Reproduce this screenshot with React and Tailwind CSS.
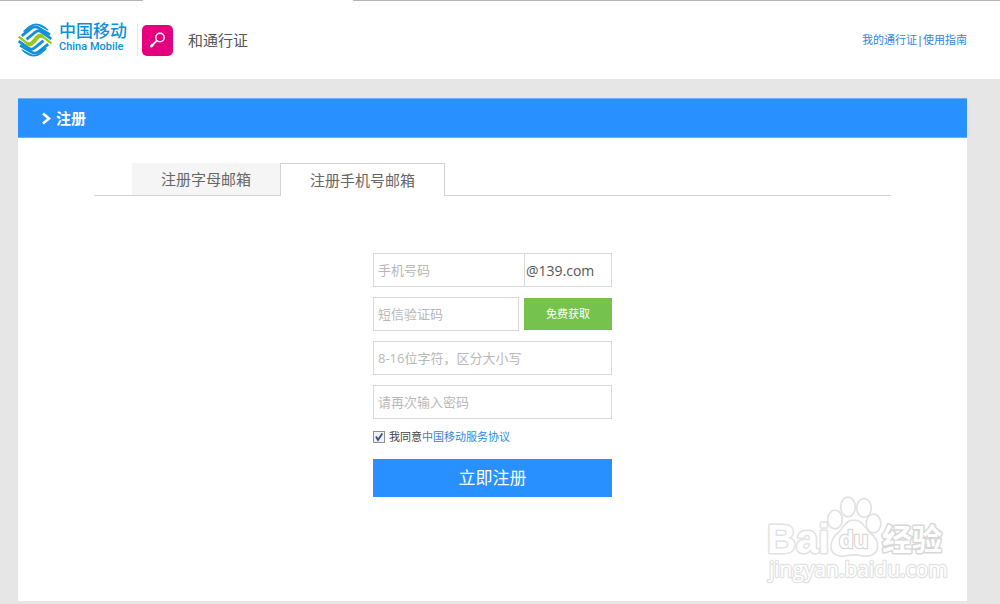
import React, { useState } from "react";

const field =
  "h-[34px] border border-[#d9d9d9] bg-white px-1 text-[13px] text-[#555] placeholder-[#b8b8b8] outline-none";

// one half of the mark, the other half is the same shape turned by 180deg
function Waves() {
  return (
    <>
      <path d="M17 24 L33 10 Q50 -3 70 7 Q80 12 88 21 L66 9 Q50 0 36 12 L22 24 Z" fill="#0d8fdb" strokeWidth="3" />
      <path d="M11 38 L39 16 Q50 8 62 15 L94 34" strokeWidth="8" />
      <path d="M25 48 L51 27 Q60 19 69 26 L98 47" strokeWidth="8" />
    </>
  );
}

function MobileLogo() {
  return (
    <svg viewBox="0 0 100 100" className="h-[34px] w-[34px]" fill="none" strokeLinejoin="round">
      <g stroke="#0d8fdb">
        <Waves />
        <g transform="rotate(180 50 50)">
          <Waves />
        </g>
      </g>
      <path d="M2 40 L27 60 Q34 66 42 59 L58 41 Q66 34 73 40 L98 60" stroke="#93c81e" strokeWidth="7" />
      <path d="M27 60 Q34 66 42 59 L58 41 Q66 34 73 40" stroke="#93c81e" strokeWidth="12" />
    </svg>
  );
}

function KeyIcon() {
  return (
    <svg viewBox="0 0 31 31" className="h-[31px] w-[31px] rounded-[5px] bg-[#e5007f]" fill="none" stroke="#fff">
      <circle cx="18" cy="12.5" r="4.2" strokeWidth="1.4" />
      <path d="M15 15.5 L8.5 22" strokeWidth="1.8" />
      <path d="M9 19.5 L10.8 21.5" strokeWidth="2.4" />
    </svg>
  );
}

function Watermark() {
  return (
    <svg
      viewBox="0 0 190 94"
      aria-hidden="true"
      className="pointer-events-none absolute right-[47px] bottom-[11px] h-[94px] w-[190px] overflow-visible"
      fill="#fff"
      stroke="#e2e2e2"
      strokeWidth="3"
      strokeLinejoin="round"
      paintOrder="stroke"
    >
      <text x="4" y="54" fontSize="40" fontWeight="bold" fontFamily="'Liberation Sans', sans-serif">Bai</text>
      <g strokeWidth="3.4">
        <ellipse cx="72" cy="20.5" rx="6.5" ry="8.5" />
        <ellipse cx="85" cy="8" rx="6.5" ry="9" />
        <ellipse cx="101" cy="9" rx="6.5" ry="8.5" />
        <ellipse cx="110.5" cy="24.5" rx="6.5" ry="8.5" />
        <path d="M91 22 C99 22 100 28 106 34 C116 41 117 54 106 56 C100 57 97 55 91 55 C85 55 82 57 76 56 C66 54 67 41 76 34 C82 28 83 22 91 22 Z" />
      </g>
      <text x="76" y="49" fontSize="24" strokeWidth="2.5" stroke="#d8d8d8" fontWeight="bold" fontFamily="'Liberation Sans', sans-serif">du</text>
      <text x="119" y="51" fontSize="30" stroke="#d8d8d8" fontWeight="bold" fontFamily="'Noto Sans CJK SC', sans-serif">经验</text>
      <text x="6" y="78" fontSize="21" strokeWidth="2.5" fontFamily="'Open Sans', sans-serif">jingyan.baidu.com</text>
    </svg>
  );
}

function Header() {
  return (
    <header className="bg-white">
      <div className="flex h-px">
        <div className="w-[143px] bg-[#b4b4b4]" />
        <div className="w-[210px]" />
        <div className="flex-1 bg-[#b4b4b4]" />
      </div>
      <div className="flex h-[78px] items-center pr-[33px] pl-[18px]">
        <MobileLogo />
        <div className="ml-[7px] pb-1 text-[#0d8fdb]">
          <div className="text-[17px] leading-[18px] font-medium">中国移动</div>
          <div className="font-['Roboto',sans-serif] text-[11px] leading-[14px] font-medium">China Mobile</div>
        </div>
        <div className="mr-1 ml-[10px] h-8 w-px bg-[#e6e6e6]" />
        <KeyIcon />
        <h1 className="ml-[15px] text-[15px] text-[#555]">和通行证</h1>
        <nav className="ml-auto flex text-[11px] text-[#2f86e0]">
          <a href="#passport">我的通行证</a>
          <span className="text-[#555]">|</span>
          <a href="#guide">使用指南</a>
        </nav>
      </div>
    </header>
  );
}

function Tabs() {
  return (
    <div className="mx-[76px] mt-[25px] flex h-[33px] border-b border-[#d3d3d3] pl-[38px]">
      <button type="button" className="h-8 w-[148px] bg-[#f5f5f5] text-[15px] text-[#666]">
        注册字母邮箱
      </button>
      <button
        type="button"
        className="-mb-px w-[165px] border border-b-0 border-[#d3d3d3] bg-white text-[15px] text-[#666]"
      >
        注册手机号邮箱
      </button>
    </div>
  );
}

function RegisterForm() {
  const [agreed, setAgreed] = useState(true);

  return (
    <form className="mx-auto mt-[57px] flex w-[239px] flex-col gap-[10px]" onSubmit={(e) => e.preventDefault()}>
      <div className="flex">
        <input type="tel" aria-label="手机号码" placeholder="手机号码" className={`${field} w-[151px] border-r-0`} />
        <span className="flex flex-1 items-center border border-[#d9d9d9] pl-px text-[14px] text-[#555]">@139.com</span>
      </div>
      <div className="flex items-center gap-[5px]">
        <input type="text" aria-label="短信验证码" placeholder="短信验证码" className={`${field} w-[146px]`} />
        <button type="button" className="h-8 flex-1 bg-[#75c34d] text-[11px] text-white">
          免费获取
        </button>
      </div>
      <input type="password" aria-label="密码" placeholder="8-16位字符，区分大小写" className={field} />
      <input type="password" aria-label="确认密码" placeholder="请再次输入密码" className={field} />
      <div className="flex h-4 items-center gap-1 text-[11px] text-[#444]">
        <span className="relative flex h-3 w-3">
          <input
            id="agree"
            type="checkbox"
            checked={agreed}
            onChange={(e) => setAgreed(e.target.checked)}
            className="h-3 w-3 appearance-none border border-[#8e8f8f] bg-[#eef1f5]"
          />
          {agreed && (
            <svg viewBox="0 0 12 12" className="pointer-events-none absolute inset-0" fill="none" stroke="#3b4f8a" strokeWidth="1.8">
              <path d="M3 5.5 L5 9 L9.3 2.5" />
            </svg>
          )}
        </span>
        <div>
          <label htmlFor="agree">我同意</label>
          <a href="#terms" className="text-[#2f86e0]">中国移动服务协议</a>
        </div>
      </div>
      <button type="submit" className="mt-1 h-[38px] bg-[#2990ff] text-[17px] text-white">
        立即注册
      </button>
    </form>
  );
}

export default function App() {
  return (
    <div className="flex min-h-screen flex-col bg-[#e6e6e6] font-['Open_Sans','Noto_Sans_CJK_SC',sans-serif]">
      <Header />
      <main className="relative mt-[19px] mr-[33px] mb-[3px] ml-[18px] flex-1 bg-white">
        <div className="flex h-10 items-center gap-1 border-y border-[#69b0fb] bg-[#2990ff] pl-[23px] text-white">
          <svg viewBox="0 0 11 13" className="h-[13px] w-[11px]" fill="none" stroke="#fff" strokeWidth="2.6">
            <path d="M2 1.5 L8 6.5 L2 11.5" />
          </svg>
          <h2 className="text-[15px] font-bold">注册</h2>
        </div>
        <Tabs />
        <RegisterForm />
      </main>
      <Watermark />
    </div>
  );
}
